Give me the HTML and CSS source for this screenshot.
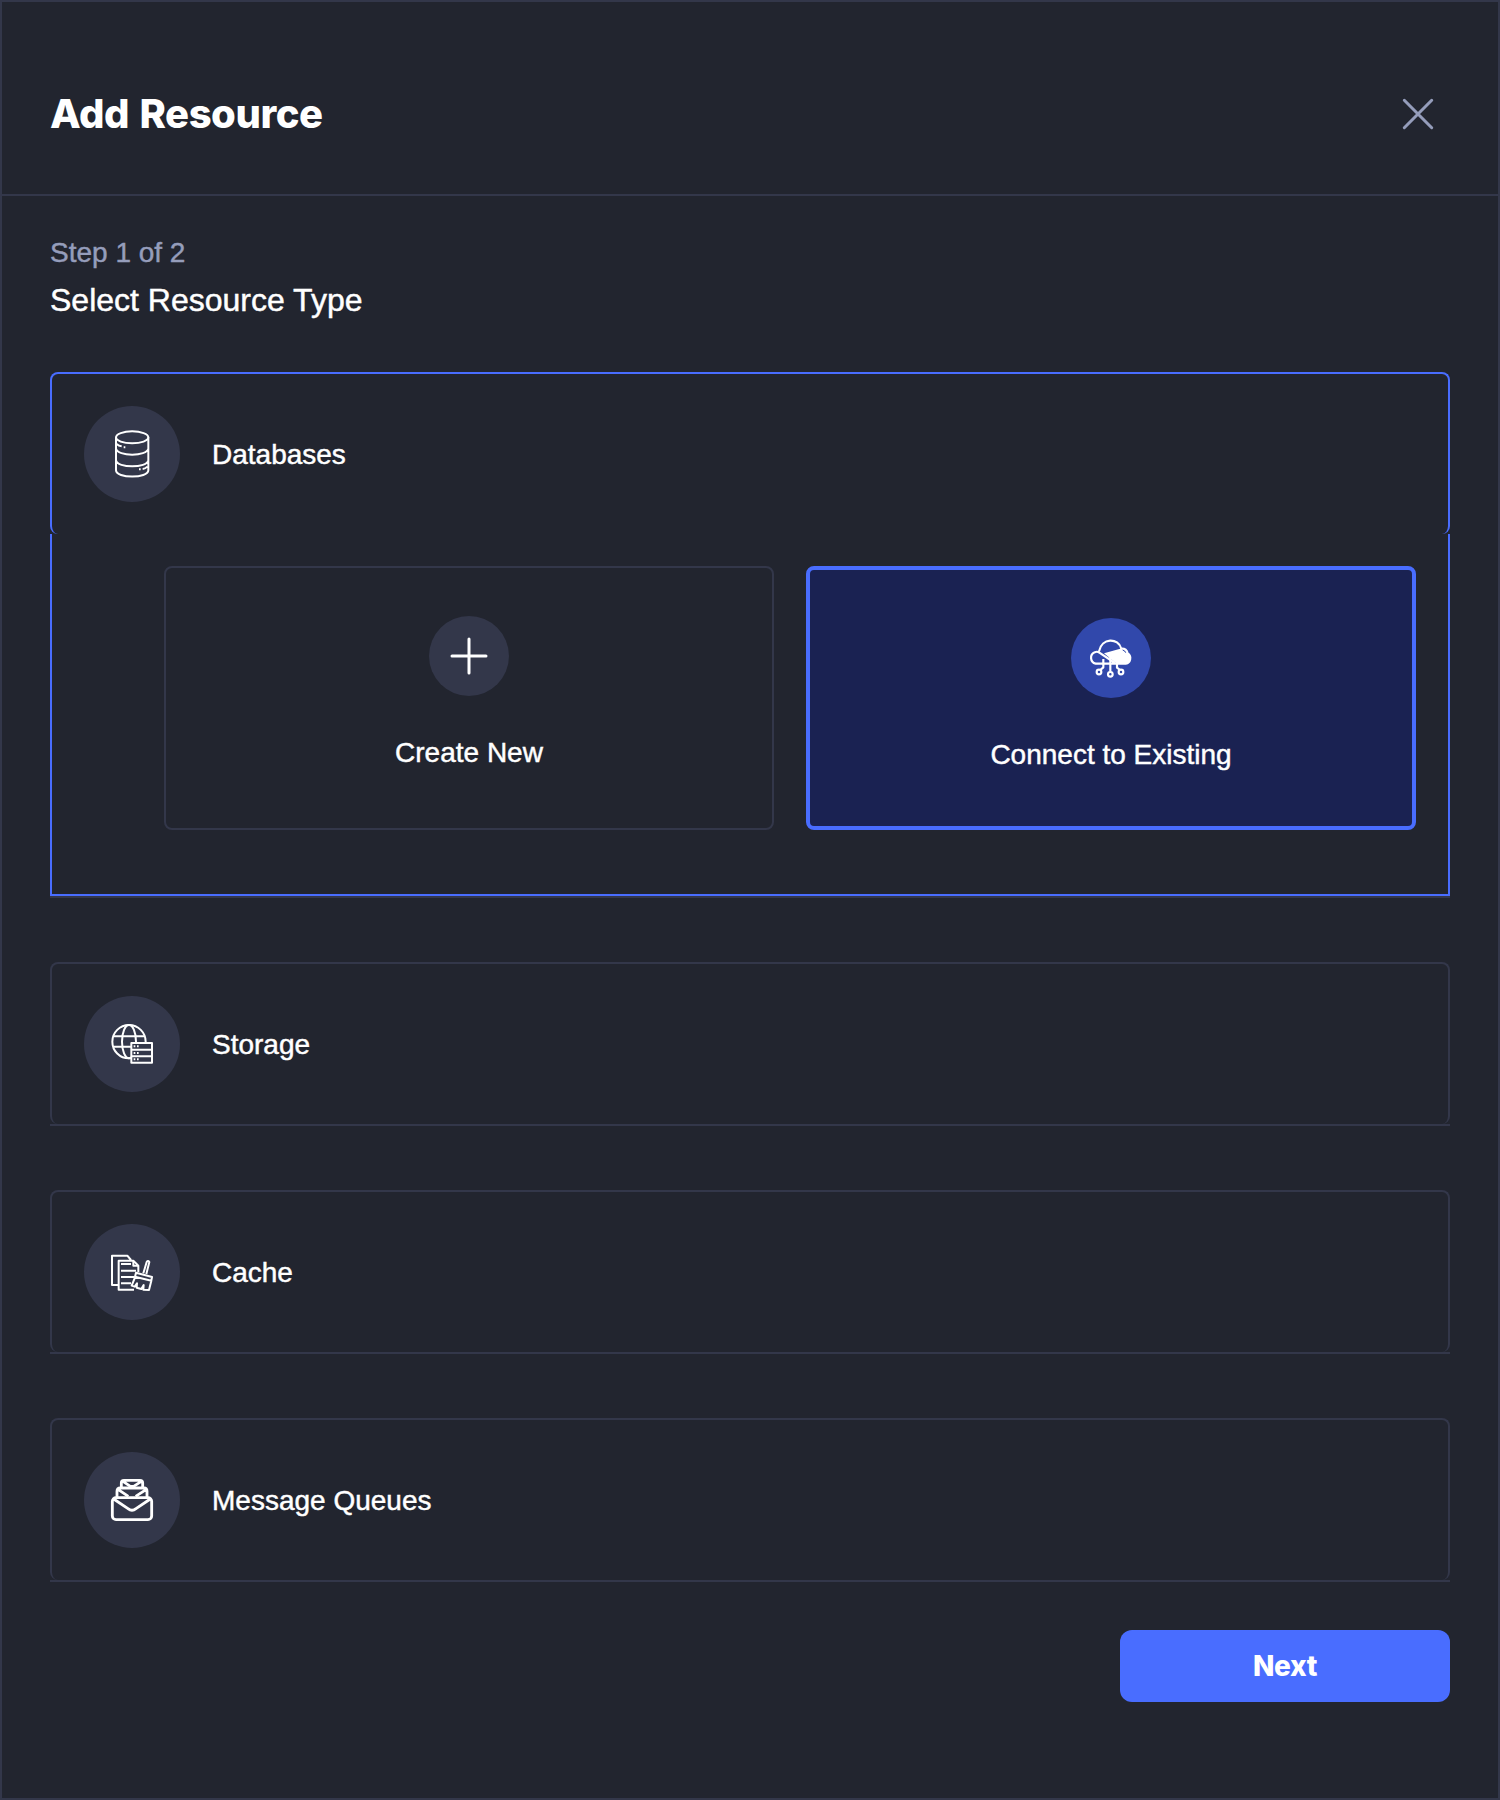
FILE: index.html
```html
<!DOCTYPE html>
<html lang="en">
<head>
<meta charset="utf-8">
<title>Add Resource</title>
<link rel="stylesheet" href="styles.css">
</head>
<body>
<main class="panel">
  <header class="panel-header">
    <h1 class="title">Add Resource</h1>
    <button class="close" aria-label="Close">
      <svg viewBox="0 0 32 32" width="32" height="32"><path d="M2.3 2.3 29.7 29.7M29.7 2.3 2.3 29.7"/></svg>
    </button>
  </header>
  <div class="content">
    <p class="step">Step 1 of 2</p>
    <h2 class="subtitle">Select Resource Type</h2>

    <div class="resources">
      <section class="resource open">
        <div class="resource-head">
          <span class="badge">
            <svg class="icon" viewBox="12 18 288 288">
              <ellipse cx="156.500" cy="112" rx="48.500" ry="18"/>
              <path d="M108 112V211C108 236 205 236 205 211V112M108 146C112 170 201 170 205 146M108 181C112 205 201 205 205 181M110 132Q116 138 125 139M131 141.500h5M177 208h5M188 207Q196 206 202 200"/>
            </svg>
          </span>
          <span class="label">Databases</span>
        </div>
        <div class="resource-body">
          <div class="option">
            <span class="badge small">
              <svg class="icon plus" viewBox="0 0 80 80"><path d="M40 23V57M23 40H57"/></svg>
            </span>
            <span class="label">Create New</span>
          </div>
          <div class="option selected">
            <span class="badge small">
              <svg class="icon cloud" viewBox="33 30 240 240">
                <path d="M165 165 118 134Q111 129 104 133A18 18 0 0 0 107 167H197A17 17 0 0 0 203 136Q199 121 184 122C175 89 125 88 117 130"/>
                <path class="solid" d="M132 136 186 121 204 136Q219 158 202 168H171Z"/>
                <path d="M130 153V178L121 186M151 147V191M171 160V179L180 186"/>
                <circle cx="117" cy="192" r="7"/><circle cx="151" cy="199" r="7"/><circle cx="183" cy="192" r="7"/>
                <path class="notch" d="M188 126Q195 128 197 134"/>
              </svg>
            </span>
            <span class="label">Connect to Existing</span>
          </div>
        </div>
      </section>

      <section class="resource">
        <div class="resource-head">
          <span class="badge">
            <svg class="icon" viewBox="12 12 288 288">
              <circle cx="147" cy="149" r="50"/>
              <ellipse cx="147" cy="149" rx="21" ry="50"/>
              <path d="M100 133H194M100 164H194"/>
              <path class="cover" d="M154 153H216V212H154ZM154 173H216M154 193H216"/>
              <path d="M161 163h5M171 163h5M161 183h5M171 183h5M161 202h5M171 202h5"/>
            </svg>
          </span>
          <span class="label">Storage</span>
        </div>
      </section>

      <section class="resource">
        <div class="resource-head">
          <span class="badge">
            <svg class="icon" viewBox="12 12 288 288">
              <path d="M114 195H96V107H142L153 120M162 209H116V122H160L175 137V156M160 122V137H175M123 132H153M123 152H168M123 171H162M123 190H153"/>
              <path d="M190 160 200 126Q204 120 208 126L199 162M168 158 216 171 214 182 165 170ZM166 170 155 197 164 200 171 190 170 203 184 207 191 195 190 209 207 210 214 182"/>
            </svg>
          </span>
          <span class="label">Cache</span>
        </div>
      </section>

      <section class="resource">
        <div class="resource-head">
          <span class="badge">
            <svg class="icon thick" viewBox="12 12 288 288">
              <rect x="97" y="149" width="118" height="66" rx="11"/>
              <path d="M101 153 144 182Q156 192 168 182L211 153"/>
              <path d="M111 147V130Q111 120 121 120H192Q201 120 201 130V147M115 125 145 145M198 125 167 145"/>
              <path d="M124 118V105Q124 97 132 97H180Q188 97 188 105V118M129 100 151 115H161L184 100"/>
            </svg>
          </span>
          <span class="label">Message Queues</span>
        </div>
      </section>
    </div>

    <footer class="actions"><button class="next">Next</button></footer>
  </div>
</main>
</body>
</html>
```
FILE: styles.css
```css
* { box-sizing: border-box; margin: 0; padding: 0; }

body {
  background: #22252f;
  color: #fff;
  font-family: "Liberation Sans", Arial, sans-serif;
}

.panel {
  height: 1800px;
  border: 2px solid #33374a;
}

.panel-header {
  display: flex;
  align-items: center;
  justify-content: space-between;
  height: 194px;
  padding: 32px 64px 0 48px;
  border-bottom: 2px solid #33374a;
}

.title {
  padding-bottom: 1px;
  font: 800 40px/48px Inter, sans-serif;
  letter-spacing: -0.45px;
  word-spacing: 2px;
}

button { border: 0; background: none; color: inherit; }
.close { display: flex; }
.close svg { stroke: #959dbb; stroke-width: 3; stroke-linecap: round; }

.content { padding: 41px 48px 0; }
.step { font-size: 28px; line-height: 32px; color: #959dbb; }
.step, .subtitle, .label { -webkit-text-stroke: 0.45px; }
.subtitle { margin-top: 11px; font-size: 32px; line-height: 40px; font-weight: 400; }

.resources {
  display: flex;
  flex-direction: column;
  gap: 64px;
  margin-top: 52px;
}

.resource { border-bottom: 2px solid #33374a; }

.resource-head {
  display: flex;
  align-items: center;
  gap: 32px;
  height: 162px;
  padding: 32px;
  border: 2px solid #33374a;
  border-bottom: 0;
  border-radius: 8px;
}

.open .resource-head { border-color: #496dff; }
.label { padding-top: 2px; font-size: 28px; line-height: 32px; }

.badge {
  width: 96px;
  height: 96px;
  border-radius: 50%;
  background: #33374a;
}

.badge.small { width: 80px; height: 80px; }

.icon {
  display: block;
  width: 100%;
  height: 100%;
  fill: none;
  stroke: #fff;
  stroke-width: 6;
  stroke-linejoin: round;
}

.thick { stroke-width: 8.5; }
.plus { stroke-width: 3; stroke-linecap: round; }
.cloud { stroke-width: 6.5; }
.solid { fill: #fff; stroke: none; }
.cover { fill: #33374a; }
.notch { stroke: #3148ab; stroke-width: 3; }

.resource-body {
  display: grid;
  grid-template-columns: 1fr 1fr;
  gap: 32px;
  height: 362px;
  padding: 32px 32px 64px 112px;
  border: 2px solid #496dff;
  border-top: 0;
}

.option {
  display: flex;
  flex-direction: column;
  align-items: center;
  gap: 39px;
  padding-top: 48px;
  border: 2px solid #33374a;
  border-radius: 8px;
}

.option.selected { border: 4px solid #496dff; background: #1a2252; }
.selected .badge { background: #3148ab; }

.actions { display: flex; justify-content: flex-end; margin-top: 48px; }

.next {
  width: 330px;
  height: 72px;
  border-radius: 12px;
  background: #496dff;
  font: 800 28px/32px Inter, sans-serif;
  letter-spacing: -0.3px;
}
```
